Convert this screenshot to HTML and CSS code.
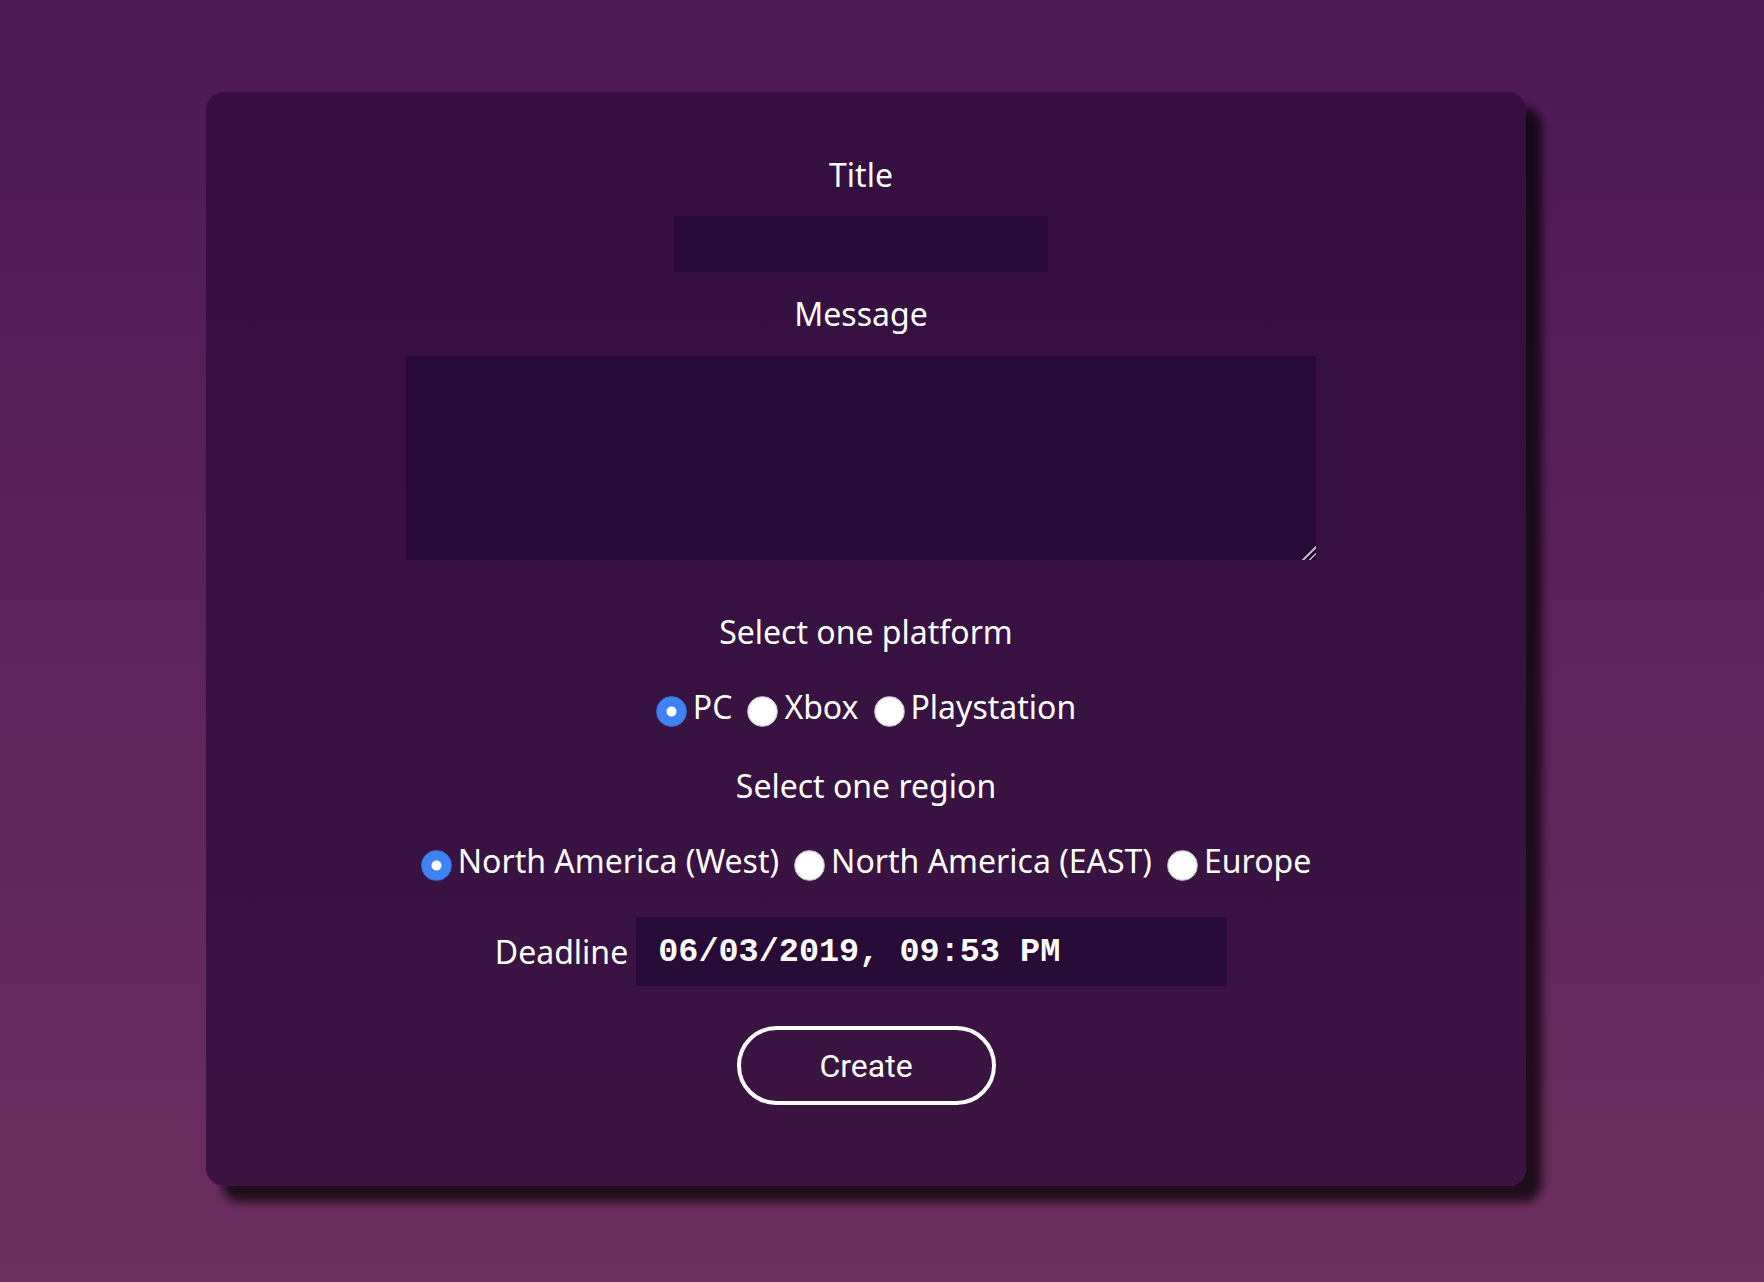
FILE: index.html
```html
<!DOCTYPE html>
<html lang="en">
<head>
<meta charset="utf-8">
<title>Create</title>
<link rel="stylesheet" href="styles.css">
</head>
<body>
<div class="page">
  <form class="card">
    <label class="label shift" for="title">Title</label>
    <input id="title" class="title-input shift" type="text">

    <label class="label msg-label shift" for="message">Message</label>
    <textarea id="message" class="message shift"></textarea>

    <div class="label platform-label">Select one platform</div>
    <div class="options">
      <label class="option"><input class="radio" type="radio" name="platform" checked>PC</label>
      <label class="option"><input class="radio" type="radio" name="platform">Xbox</label>
      <label class="option"><input class="radio" type="radio" name="platform">Playstation</label>
    </div>

    <div class="label region-label">Select one region</div>
    <div class="options">
      <label class="option"><input class="radio" type="radio" name="region" checked>North America (West)</label>
      <label class="option"><input class="radio" type="radio" name="region">North America (EAST)</label>
      <label class="option"><input class="radio" type="radio" name="region">Europe</label>
    </div>

    <div class="deadline-row">
      <label class="deadline-label" for="deadline">Deadline</label>
      <input id="deadline" class="deadline-input" type="text" value="06/03/2019, 09:53 PM">
    </div>

    <button class="create" type="button">Create</button>
  </form>
</div>
</body>
</html>
```
FILE: styles.css
```css
html, body {
  margin: 0;
  height: 100%;
}

body {
  background: linear-gradient(180deg, #4a1a53 0%, #5a2358 45%, #6c305f 100%);
  font-family: "Noto Sans", "Open Sans", sans-serif;
  color: #fff;
}

.page {
  box-sizing: border-box;
  min-height: 100vh;
  padding: 92px 0 0 206px;
}

.card {
  box-sizing: border-box;
  width: 1320px;
  padding: 61px 0 81px;
  border-radius: 18px;
  background: linear-gradient(180deg, #340f40 0%, #3b1442 100%);
  box-shadow: 16px 16px 10px rgba(0, 0, 0, 0.7);
  display: flex;
  flex-direction: column;
  align-items: center;
}

.label {
  display: block;
  font-size: 32px;
  line-height: 44px;
}

.shift {
  margin-right: 10px;
}

.title-input {
  box-sizing: border-box;
  width: 374px;
  height: 56px;
  margin-top: 19px;
  padding: 0 12px;
  border: 0;
  outline: none;
  background: #270a36;
  color: #fff;
  font-family: inherit;
  font-size: 24px;
}

.msg-label {
  margin-top: 20px;
}

.message {
  display: block;
  box-sizing: border-box;
  width: 910px;
  height: 204px;
  margin-top: 20px;
  border: 0;
  outline: none;
  background: #270a36;
  color: #fff;
}

.message::-webkit-resizer {
  background:
    linear-gradient(135deg,
      transparent 0 52%,
      #b8b0bc 52% 60%,
      transparent 60% 74%,
      #b8b0bc 74% 82%,
      transparent 82%);
}

.platform-label {
  margin-top: 50px;
}

.region-label {
  margin-top: 35px;
}

.options {
  display: flex;
  justify-content: center;
  gap: 15px;
  margin-top: 31px;
  font-size: 32px;
  line-height: 44px;
}

.option {
  display: flex;
  align-items: center;
  gap: 6px;
}

.radio {
  appearance: none;
  -webkit-appearance: none;
  box-sizing: border-box;
  width: 31px;
  height: 31px;
  margin: 9px 0 0;
  border-radius: 50%;
  border: 1px solid #c4bfc6;
  background: radial-gradient(circle, #fff 0 12px, #ece8ee 15px);
}

.radio:checked {
  border-color: #3470dc;
  background: radial-gradient(circle, #fff 0 4.5px, #3d83f5 5.5px);
}

.deadline-row {
  display: flex;
  align-items: center;
  gap: 8px;
  margin-top: 34px;
  margin-right: 10px;
}

.deadline-label {
  font-size: 32px;
  line-height: 44px;
}

.deadline-input {
  box-sizing: border-box;
  width: 591px;
  height: 69px;
  padding: 0 20px 0 22px;
  border: 0;
  outline: none;
  background: #290b38;
  color: #fff;
  font-family: "Liberation Mono", "Courier New", monospace;
  font-weight: bold;
  font-size: 33.5px;
}

.create {
  box-sizing: border-box;
  width: 259px;
  height: 79px;
  margin-top: 40px;
  border: 4px solid #fff;
  border-radius: 40px;
  background: transparent;
  color: #fff;
  font-family: Roboto, "Liberation Sans", sans-serif;
  font-size: 32px;
}
```
